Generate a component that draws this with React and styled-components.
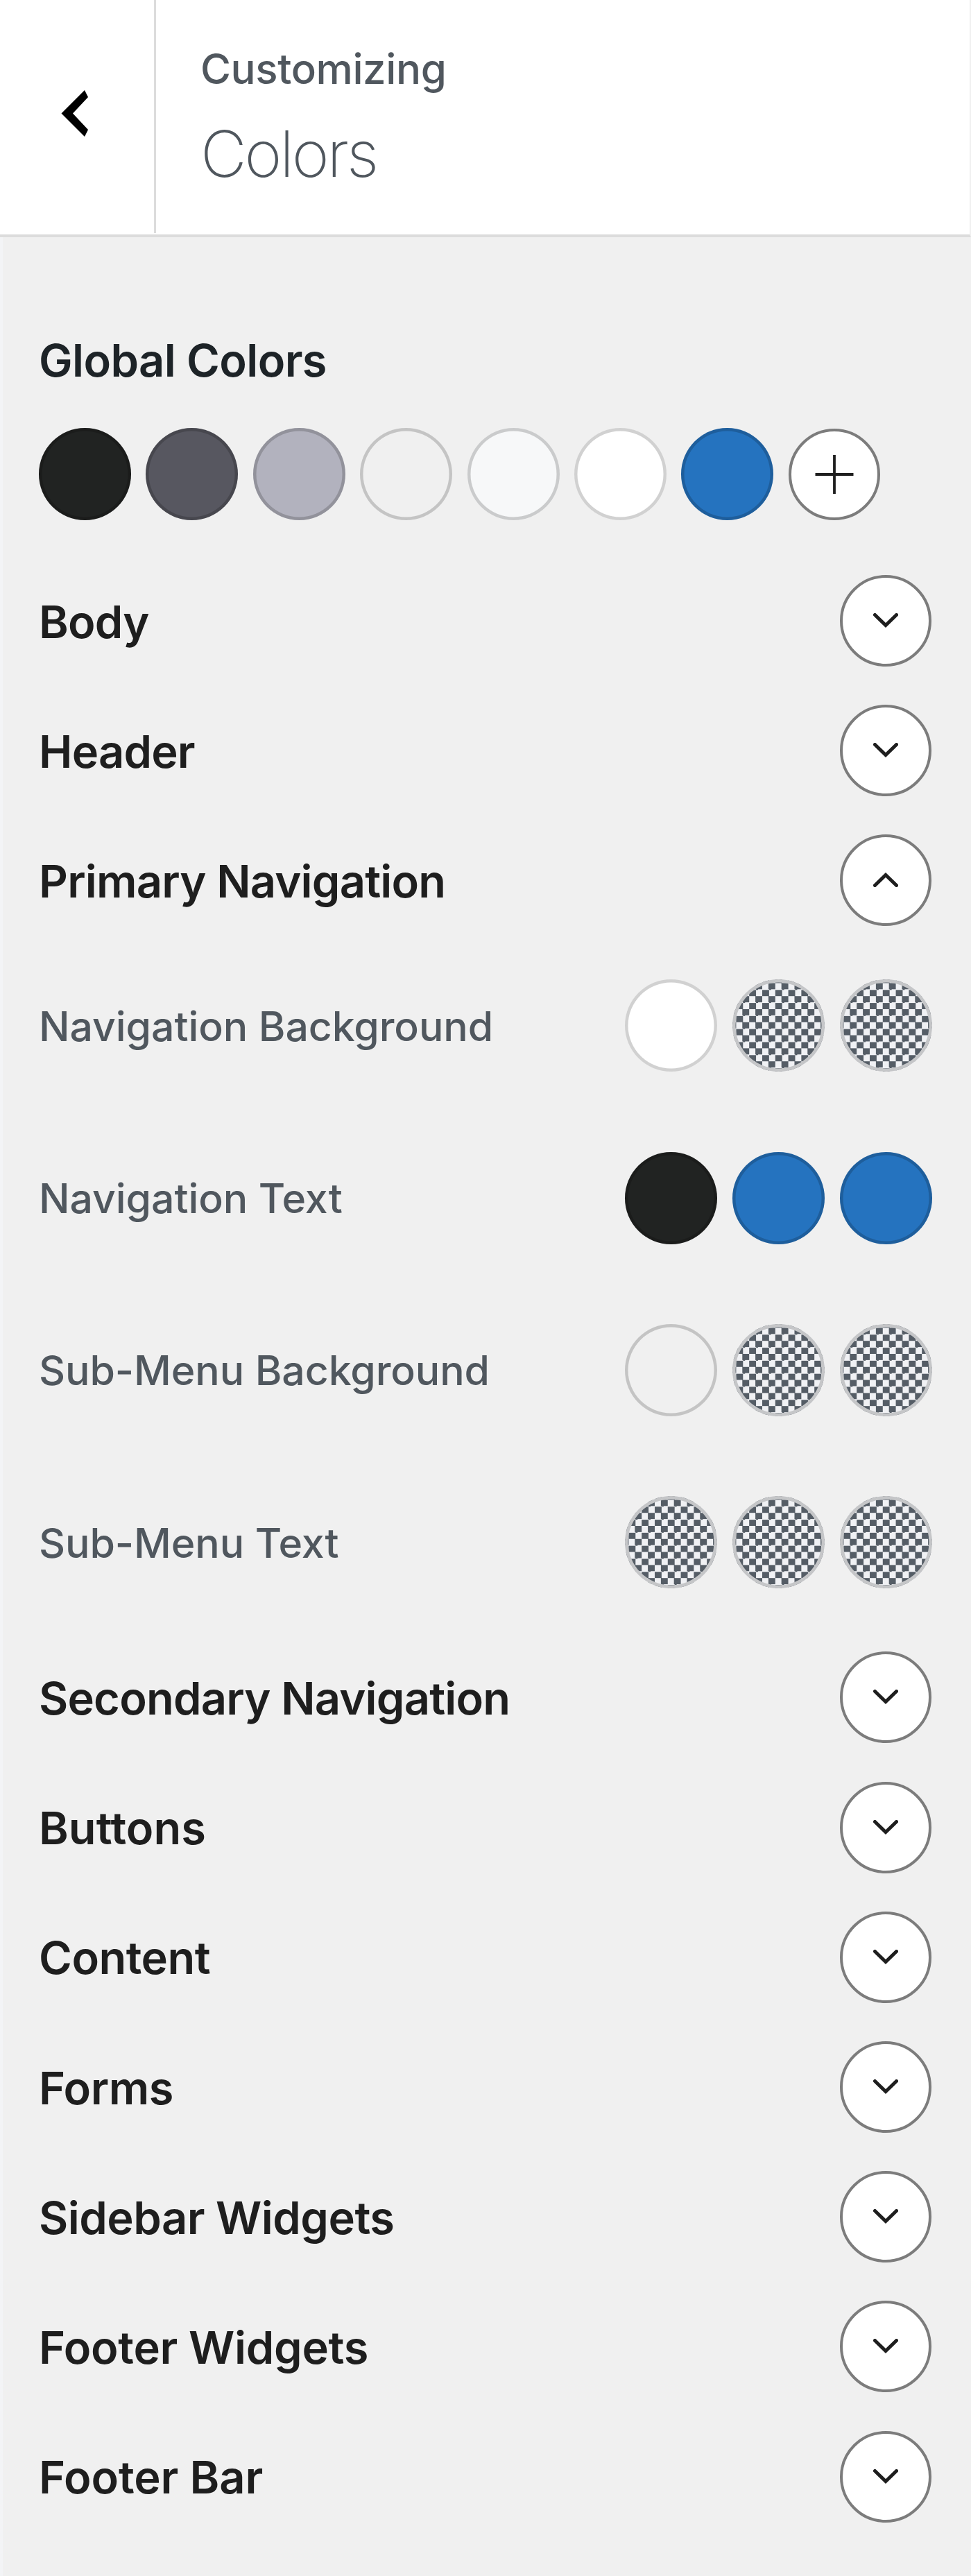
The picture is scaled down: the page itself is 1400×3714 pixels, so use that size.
import React, { useState } from "react";
import styled, { createGlobalStyle } from "styled-components";

const globalColors = ["#212322", "#575760", "#b2b2be", "#f0f0f0", "#f7f8f9", "#ffffff", "#2573bf"];

const sections = [
  { name: "Body" },
  { name: "Header" },
  {
    name: "Primary Navigation",
    controls: [
      { label: "Navigation Background", colors: ["#ffffff", null, null] },
      { label: "Navigation Text", colors: ["#212322", "#2573bf", "#2573bf"] },
      { label: "Sub-Menu Background", colors: ["#f0f0f0", null, null] },
      { label: "Sub-Menu Text", colors: [null, null, null] },
    ],
  },
  { name: "Secondary Navigation" },
  { name: "Buttons", spacing: 0 },
  { name: "Content", spacing: -0.5 },
  { name: "Forms", spacing: -0.5 },
  { name: "Sidebar Widgets", spacing: -0.5 },
  { name: "Footer Widgets", spacing: -0.3 },
  { name: "Footer Bar", spacing: -0.1 },
];

const App = () => {
  const [open, setOpen] = useState("Primary Navigation");

  return (
    <>
      <GlobalStyle />
      <Panel>
        <PanelHeader>
          <BackButton aria-label="Back">
            <svg width="40" height="68" viewBox="0 0 40 68">
              <path d="M34 0L39 10L17 33.500L39 57L34 67L0.500 33.500Z" fill="#000" />
            </svg>
          </BackButton>
          <PanelTitle>
            <span>Customizing</span>
            <h3>Colors</h3>
          </PanelTitle>
        </PanelHeader>
        <PanelBody>
          <GroupTitle>Global Colors</GroupTitle>
          <Palette>
            {globalColors.map((color) => (
              <Swatch key={color} $color={color} />
            ))}
            <RoundButton aria-label="Add color">
              <svg width="56" height="74" viewBox="0 0 56 74">
                <path d="M28 9V65M0.500 37H55.500" stroke="#1e1e1e" strokeWidth="3.800" />
              </svg>
            </RoundButton>
          </Palette>
          {sections.map((section) => {
            const isOpen = open === section.name;
            return (
              <Section key={section.name}>
                <SectionHeader>
                  <SectionName $spacing={section.spacing}>{section.name}</SectionName>
                  <RoundButton
                    aria-label={section.name}
                    aria-expanded={isOpen}
                    onClick={() => setOpen(isOpen ? "" : section.name)}
                  >
                    <Chevron $up={isOpen} width="36" height="21" viewBox="0 0 36 21">
                      <path
                        d="M2.500 2.500L18 17.500L33.500 2.500"
                        fill="none"
                        stroke="#1e1e1e"
                        strokeWidth="5"
                        strokeLinecap="round"
                      />
                    </Chevron>
                  </RoundButton>
                </SectionHeader>
                {isOpen && section.controls && (
                  <Controls>
                    {section.controls.map((control) => (
                      <ControlRow key={control.label}>
                        <ControlLabel>{control.label}</ControlLabel>
                        <SwatchGroup>
                          {control.colors.map((color, index) => (
                            <Swatch key={index} $color={color} />
                          ))}
                        </SwatchGroup>
                      </ControlRow>
                    ))}
                  </Controls>
                )}
              </Section>
            );
          })}
        </PanelBody>
      </Panel>
    </>
  );
};

export default App;

const GlobalStyle = createGlobalStyle`
  * {
    box-sizing: border-box;
  }
  body {
    margin: 0;
    background: #f0f0f0;
    font-family: Inter, "Liberation Sans", sans-serif;
  }
`;

const Panel = styled.div`
  display: flex;
  flex-direction: column;
  width: 1400px;
  min-height: 3714px;
  background: #f0f0f0;
`;

const PanelHeader = styled.div`
  flex: none;
  display: flex;
  height: 342px;
  padding-bottom: 2px;
  background: #fff;
  border-bottom: 4px solid #dcdcdc;
  border-right: 2px solid #f0f0f0;
`;

const BackButton = styled.button`
  display: flex;
  align-items: center;
  width: 225px;
  padding: 0 0 9px 88px;
  border: 0;
  border-right: 3px solid #dcdcdc;
  background: #fff;
  cursor: pointer;
`;

const PanelTitle = styled.div`
  padding: 62px 0 0 64px;
  color: #50575e;
  span {
    display: block;
    font-size: 60px;
    line-height: 74px;
    font-weight: 470;
    letter-spacing: -0.4px;
  }
  h3 {
    margin: 28px 0 0;
    font-size: 92px;
    line-height: 116px;
    font-weight: 250;
    letter-spacing: -3.200px;
  }
`;

const PanelBody = styled.div`
  flex: 1;
  padding: 138px 56px 0 52px;
  border-left: 4px solid #f3f4f6;
`;

const GroupTitle = styled.h4`
  margin: 0;
  font-size: 65px;
  line-height: 80px;
  font-weight: 600;
  letter-spacing: -0.600px;
  color: #1d2327;
`;

const Swatch = styled.button`
  flex: none;
  width: 133px;
  height: 133px;
  padding: 0;
  border: 0;
  border-radius: 50%;
  cursor: pointer;
  background: ${({ $color }) =>
    $color || "repeating-conic-gradient(#555d66 0 25%, #f0f1f4 0 50%) 5.400px 5.400px / 18.800px 18.800px"};
  box-shadow: inset 0 0 0 4.500px ${({ $color }) => ($color ? "rgba(0, 0, 0, 0.18)" : "#c5c6c8")};
`;

const RoundButton = styled.button`
  flex: none;
  display: flex;
  align-items: center;
  justify-content: center;
  width: 132px;
  height: 132px;
  padding: 0;
  border: 4px solid #7c7c7c;
  border-radius: 50%;
  background: #fff;
  cursor: pointer;
  svg {
    display: block;
  }
`;

const Palette = styled.div`
  display: flex;
  align-items: center;
  gap: 21.400px;
  margin: 57px 0 65px;
  ${RoundButton} {
    margin-top: 1px;
  }
`;

const Chevron = styled.svg`
  margin-bottom: 1px;
  transform: ${({ $up }) => ($up ? "rotate(180deg)" : "none")};
`;

const Section = styled.div`
  padding-bottom: 27.200px;
`;

const SectionHeader = styled.div`
  display: flex;
  align-items: center;
  justify-content: space-between;
  height: 160px;
  padding-right: 1px;
`;

const SectionName = styled.span`
  padding-top: 3px;
  font-size: 65px;
  line-height: 80px;
  font-weight: 600;
  letter-spacing: ${({ $spacing = -0.8 }) => $spacing}px;
  color: #1e1e1e;
`;

const Controls = styled.div`
  padding: 63px 0 50px;
`;

const ControlRow = styled.div`
  display: flex;
  align-items: center;
  justify-content: space-between;
  height: 133px;
  & + & {
    margin-top: 115.300px;
  }
`;

const ControlLabel = styled.span`
  padding-top: 2px;
  font-size: 59px;
  line-height: 76px;
  font-weight: 450;
  letter-spacing: -0.100px;
  color: #50575e;
`;

const SwatchGroup = styled.div`
  display: flex;
  gap: 21.800px;
`;
